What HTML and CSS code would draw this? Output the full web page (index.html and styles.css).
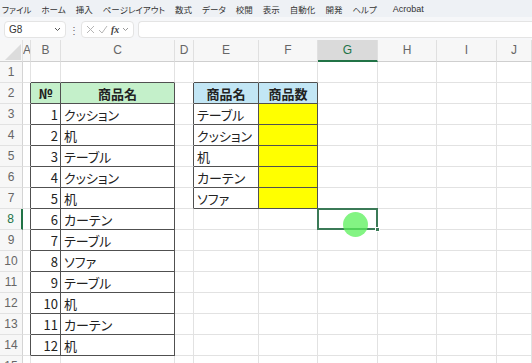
FILE: index.html
```html
<!DOCTYPE html>
<html lang="ja">
<head>
    <meta charset="UTF-8">
    <meta name="viewport" content="width=device-width, initial-scale=1.0">
    <title>Book1 - Excel</title>
    <link rel="stylesheet" href="styles.css">
</head>
<body>
    <div class="tabs">
        <span>ファイル</span>
        <span>ホーム</span>
        <span>挿入</span>
        <span>ページレイアウト</span>
        <span>数式</span>
        <span>データ</span>
        <span>校閲</span>
        <span>表示</span>
        <span>自動化</span>
        <span>開発</span>
        <span>ヘルプ</span>
        <span class="latin">Acrobat</span>
    </div>

    <div class="formula-bar">
        <div class="name-box">
            <span>G8</span>
            <svg width="7" height="5" viewBox="0 0 7 5"><path d="M1 1l2.5 2.5L6 1" fill="none" stroke="#555" stroke-width="1"/></svg>
        </div>
        <span class="dots">⋮</span>
        <div class="fx-box">
            <svg width="9" height="9" viewBox="0 0 9 9"><path d="M1 1l7 7M8 1l-7 7" stroke="#b5b5b5" stroke-width="1"/></svg>
            <svg width="10" height="9" viewBox="0 0 10 9"><path d="M1 5l3 3 5-7" fill="none" stroke="#b5b5b5" stroke-width="1"/></svg>
            <span class="fx">fx</span>
            <svg width="7" height="5" viewBox="0 0 7 5"><path d="M1 1l2.5 2.5L6 1" fill="none" stroke="#999" stroke-width="1"/></svg>
        </div>
        <div class="formula-input"></div>
    </div>

    <div class="sheet" id="sheet"></div>

    <div class="pointer"></div>

    <script>
        const sheet = document.getElementById("sheet");
        const letters = ["A", "B", "C", "D", "E", "F", "G", "H", "I", "J"];
        const cells = {};

        // 左の表：No. と商品名
        const items = ["クッション", "机", "テーブル", "クッション", "机", "カーテン",
                       "テーブル", "ソファ", "テーブル", "机", "カーテン", "机"];
        cells.B2 = { text: "№", cls: "box head-green" };
        cells.C2 = { text: "商品名", cls: "box head-green" };
        items.forEach(function(name, i) {
            cells["B" + (i + 3)] = { text: i + 1, cls: "box num" };
            cells["C" + (i + 3)] = { text: name, cls: "box" };
        });

        // 右の表：商品名と商品数
        const stock = ["テーブル", "クッション", "机", "カーテン", "ソファ"];
        cells.E2 = { text: "商品名", cls: "box head-blue" };
        cells.F2 = { text: "商品数", cls: "box head-blue" };
        stock.forEach(function(name, i) {
            cells["E" + (i + 3)] = { text: name, cls: "box" };
            cells["F" + (i + 3)] = { text: "", cls: "box yellow" };
        });

        // 表の外側の罫線
        for (let r = 2; r <= 14; r++) cells["A" + r] = { text: "", cls: "edge-r" };
        for (let r = 2; r <= 7; r++) cells["D" + r] = { text: "", cls: "edge-r" };
        ["B1", "C1", "E1", "F1"].forEach(function(key) {
            cells[key] = { text: "", cls: "edge-b" };
        });
        cells.G8 = { text: "", cls: "sel" };

        function addCell(cls, text) {
            const div = document.createElement("div");
            div.className = cls;
            div.textContent = text;
            sheet.appendChild(div);
        }

        addCell("corner", "");
        letters.forEach(function(l) {
            addCell(l === "G" ? "col-head active" : "col-head", l);
        });

        for (let r = 1; r <= 15; r++) {
            addCell(r === 8 ? "row-head active" : "row-head", r);
            letters.forEach(function(l) {
                const cell = cells[l + r];
                addCell(cell ? "cell " + cell.cls : "cell", cell ? cell.text : "");
            });
        }
    </script>
</body>
</html>
```

FILE: styles.css
```css
body {
    margin: 0;
    width: 532px;
    height: 363px;
    overflow: hidden;
    position: relative;
    background-color: #fff;
    color: #222;
    font-family: "Noto Sans CJK JP", sans-serif;
}

.tabs {
    height: 17px;
    display: flex;
    align-items: center;
    gap: 10px;
    padding-left: 2px;
    background-color: #eef1f5;
    font-size: 8.5px;
    color: #333;
    font-feature-settings: "palt";
}

.tabs .latin {
    margin-left: 6px;
    font-family: "Liberation Sans", sans-serif;
    font-size: 9px;
}

.formula-bar {
    height: 23px;
    display: flex;
    align-items: center;
    padding: 1px 0 0 4px;
    box-sizing: border-box;
    background-color: #f6f7f9;
}

.name-box {
    width: 62px;
    height: 17px;
    box-sizing: border-box;
    display: flex;
    align-items: center;
    justify-content: space-between;
    padding: 0 4px;
    background-color: #fff;
    border: 1px solid #e4e4e4;
    border-radius: 4px;
    font-family: "Liberation Sans", sans-serif;
    font-size: 10px;
    color: #333;
}

.dots {
    width: 15px;
    text-align: center;
    font-size: 10px;
    color: #666;
}

.fx-box {
    width: 53px;
    height: 17px;
    box-sizing: border-box;
    display: flex;
    align-items: center;
    justify-content: space-around;
    padding: 0 2px;
    background-color: #fff;
    border: 1px solid #e4e4e4;
    border-radius: 4px;
}

.fx {
    font-family: "Liberation Serif", serif;
    font-style: italic;
    font-weight: bold;
    font-size: 10px;
    color: #444;
}

.formula-input {
    flex: 1;
    height: 17px;
    margin-left: 4px;
    box-sizing: border-box;
    background-color: #fff;
    border: 1px solid #e4e4e4;
    border-right: none;
    border-radius: 4px 0 0 4px;
}

.sheet {
    display: grid;
    grid-template-columns: 23px 8px 30px 114px 19px 65px 59px 60px 59px 60px 1fr;
    grid-template-rows: 22px repeat(15, 21px);
}

.sheet > div {
    box-sizing: border-box;
    border-right: 1px solid #e2e2e2;
    border-bottom: 1px solid #e2e2e2;
    white-space: nowrap;
    overflow: hidden;
}

.corner,
.col-head,
.row-head {
    background-color: #f7f7f7;
    font-family: "Liberation Sans", sans-serif;
    font-size: 12px;
    color: #666;
    text-align: center;
}

.corner {
    position: relative;
    border-bottom-color: #cfcfcf !important;
}

.corner::after {
    content: "";
    position: absolute;
    left: 5px;
    top: 4px;
    width: 16px;
    height: 16px;
    background-color: #dcdcdc;
    clip-path: polygon(100% 0, 100% 100%, 0 100%);
}

.col-head {
    line-height: 21px;
    border-right-color: #e0e0e0 !important;
    border-bottom-color: #cfcfcf !important;
}

.col-head.active {
    background-color: #dadada;
    color: #217346;
    border-bottom: 2px solid #217346 !important;
}

.row-head {
    line-height: 21px;
    border-right-color: #d4d4d4 !important;
}

.row-head.active {
    color: #217346;
    border-right: 2px solid #217346 !important;
}

.cell {
    padding: 0 3px;
    font-size: 13px;
    line-height: 22px;
    font-feature-settings: "palt";
}

.cell.box {
    border-right-color: #505050;
    border-bottom-color: #505050;
}

.cell.edge-r {
    border-right-color: #505050;
}

.cell.edge-b {
    border-bottom-color: #505050;
}

.cell.num {
    text-align: right;
    padding-right: 2px;
}

.head-green,
.head-blue {
    text-align: center;
    font-weight: bold;
}

.head-green {
    background-color: #c4f0ca;
}

.head-blue {
    background-color: #c2e6f5;
}

.yellow {
    background-color: #ffff00;
}

.cell.sel {
    position: relative;
    overflow: visible;
}

.cell.sel::before {
    content: "";
    position: absolute;
    left: -1px;
    top: -1px;
    right: -1px;
    bottom: -1px;
    border: 2px solid #3b7a57;
}

.cell.sel::after {
    content: "";
    position: absolute;
    right: -3px;
    bottom: -3px;
    width: 5px;
    height: 5px;
    background-color: #3b7a57;
    border: 1px solid #fff;
    box-sizing: border-box;
}

.pointer {
    position: absolute;
    left: 343px;
    top: 212px;
    width: 25px;
    height: 25px;
    border-radius: 50%;
    background-color: rgba(90, 240, 90, 0.75);
}
```
